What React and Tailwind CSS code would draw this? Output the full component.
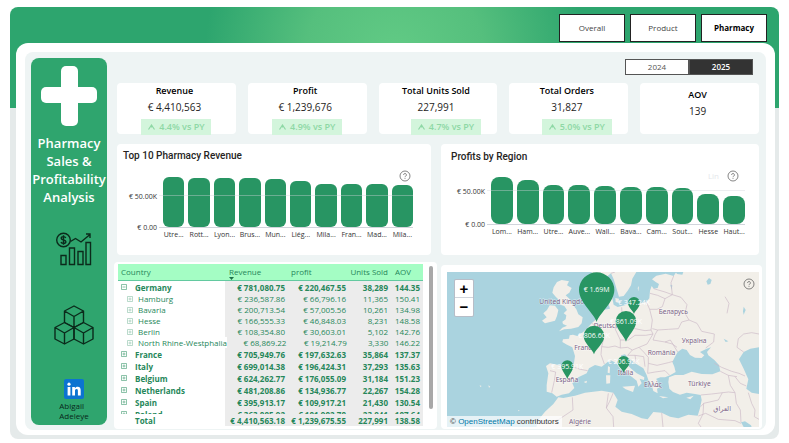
import { useState } from "react";
import clsx from "clsx";

const tabs = ["Overall", "Product", "Pharmacy"];
const years = ["2024", "2025"];

const kpis = [
  { label: "Revenue", value: "€ 4,410,563", change: "4.4% vs PY" },
  { label: "Profit", value: "€ 1,239,676", change: "4.9% vs PY" },
  { label: "Total Units Sold", value: "227,991", change: "4.7% vs PY", shifted: true },
  { label: "Total Orders", value: "31,827", change: "5.0% vs PY", shifted: true },
  { label: "AOV", value: "139" },
];

// bar heights in px above the axis
const pharmacyRevenue = [
  { name: "Utre...", height: 50 },
  { name: "Rott...", height: 49 },
  { name: "Lyon...", height: 49 },
  { name: "Brus...", height: 49 },
  { name: "Mun...", height: 48 },
  { name: "Liég...", height: 46 },
  { name: "Mila...", height: 43 },
  { name: "Fran...", height: 43 },
  { name: "Mad...", height: 43 },
  { name: "Mila...", height: 42 },
];

const regionProfit = [
  { name: "Lom...", height: 47 },
  { name: "Ham...", height: 44 },
  { name: "Utre...", height: 39 },
  { name: "Auve...", height: 39 },
  { name: "Wall...", height: 38 },
  { name: "Bava...", height: 37 },
  { name: "Cam...", height: 37 },
  { name: "Sout...", height: 36 },
  { name: "Hesse", height: 30 },
  { name: "Haut...", height: 28 },
];

const rows = [
  { name: "Germany", open: true, cells: ["€ 781,080.75", "€ 220,467.55", "38,289", "144.35"] },
  { name: "Hamburg", child: true, cells: ["€ 236,587.86", "€ 66,796.16", "11,365", "150.41"] },
  { name: "Bavaria", child: true, cells: ["€ 200,713.54", "€ 57,005.56", "10,261", "134.98"] },
  { name: "Hesse", child: true, cells: ["€ 166,555.33", "€ 46,848.03", "8,231", "148.58"] },
  { name: "Berlin", child: true, cells: ["€ 108,354.80", "€ 30,603.01", "5,102", "142.76"] },
  { name: "North Rhine-Westphalia", child: true, cells: ["€ 68,869.22", "€ 19,214.79", "3,330", "146.22"] },
  { name: "France", cells: ["€ 705,949.76", "€ 197,632.63", "35,864", "137.37"] },
  { name: "Italy", cells: ["€ 699,014.38", "€ 196,424.31", "37,293", "135.63"] },
  { name: "Belgium", cells: ["€ 624,262.77", "€ 176,055.09", "31,184", "151.23"] },
  { name: "Netherlands", cells: ["€ 481,208.86", "€ 134,936.77", "22,267", "154.28"] },
  { name: "Spain", cells: ["€ 395,913.17", "€ 109,917.21", "21,430", "130.54"] },
  { name: "Poland", cells: ["€ 363,085.92", "€ 101,902.70", "23,841", "107.64"] },
];

const totals = ["€ 4,410,563.18", "€ 1,239,675.55", "227,991", "138.58"];

const places = [
  { name: "United Kingdom", x: 313, y: 132 },
  { name: "Deutschland", x: 476, y: 203 },
  { name: "France", x: 418, y: 271 },
  { name: "España", x: 362, y: 366 },
  { name: "Italia", x: 548, y: 344 },
  { name: "România", x: 638, y: 285 },
  { name: "Україна", x: 740, y: 249 },
  { name: "Беларусь", x: 671, y: 161 },
  { name: "Ελλάς", x: 627, y: 381 },
  { name: "Türkiye", x: 759, y: 378 },
  { name: "العراق", x: 888, y: 454 },
  { name: "Algérie", x: 402, y: 492 },
];

const pins = [
  { label: "€ 347.24K", x: 597, y: 129, r: 18, tip: 162 },
  { label: "€ 1.69M", x: 485, y: 90, r: 53, tip: 186 },
  { label: "€ 861.09K", x: 573, y: 184, r: 31, tip: 245 },
  { label: "€ 806.60K", x: 477, y: 228, r: 31, tip: 283 },
  { label: "€ 206.92K", x: 566, y: 306, r: 18, tip: 338 },
  { label: "€ 395.91K", x: 397, y: 319, r: 18, tip: 357 },
];

const land = [
  // mainland europe, turkey and north africa
  "M972 36 L724 36 L716 48 L692 41 L664 47 L651 58 L662 66 L672 72 L668 84 L656 86 L650 78 L645 92 L643 115 L634 126 L615 130 L600 124 L572 135 L548 141 L536 134 L532 116 L536 98 L530 86 L519 95 L518 122 L525 146 L508 149 L495 156 L485 176 L470 190 L455 206 L440 220 L427 228 L414 224 L404 226 L402 236 L384 238 L382 246 L396 254 L412 262 L420 288 L415 322 L385 318 L345 310 L333 318 L340 340 L335 375 L335 395 L352 400 L365 410 L380 404 L402 400 L418 384 L412 370 L430 352 L455 340 L462 325 L480 315 L500 320 L515 308 L526 300 L545 310 L555 326 L575 340 L590 350 L605 362 L610 380 L620 370 L614 356 L627 360 L628 352 L605 340 L587 325 L572 310 L562 300 L558 286 L570 283 L578 292 L600 310 L625 325 L635 345 L640 360 L650 375 L655 393 L668 400 L666 386 L674 382 L668 370 L664 356 L676 352 L690 352 L705 346 L722 336 L718 320 L712 306 L720 290 L728 276 L742 266 L755 270 L765 285 L780 293 L800 294 L808 286 L795 276 L815 266 L828 262 L816 276 L820 286 L838 300 L852 315 L856 334 L832 343 L800 342 L770 335 L745 345 L720 345 L702 352 L700 366 L703 386 L714 396 L735 404 L755 398 L780 402 L797 405 L800 420 L795 445 L788 467 L760 464 L730 475 L705 470 L680 458 L655 456 L638 478 L620 475 L590 462 L560 455 L541 440 L548 420 L535 398 L500 392 L450 398 L420 407 L385 414 L370 412 L355 432 L330 455 L310 480 L304 501 L972 501 Z",
  // great britain
  "M366 66 L380 60 L402 64 L396 76 L410 84 L403 98 L392 106 L403 116 L412 132 L424 148 L430 163 L443 172 L440 190 L430 201 L408 206 L388 208 L372 214 L382 203 L396 197 L384 192 L382 185 L392 178 L394 166 L386 160 L396 150 L388 138 L376 134 L372 120 L362 110 L352 98 L356 82 Z",
  // ireland
  "M344 136 L360 137 L370 150 L366 168 L360 182 L330 190 L321 182 L335 172 L325 160 L336 150 Z",
  // scandinavia
  "M470 36 L474 48 L500 62 L528 40 L536 58 L544 84 L552 110 L566 108 L578 92 L588 76 L592 56 L604 36 Z",
  "M541 114 L552 116 L550 128 L542 126 Z",
  "M608 84 L612 78 L610 94 Z",
  // mediterranean islands
  "M519 318 L525 322 L524 340 L518 338 Z",
  "M513 346 L526 346 L525 370 L514 371 Z",
  "M562 380 L600 377 L594 396 L572 388 Z",
  "M672 408 L700 412 L684 415 Z",
  "M754 413 L776 407 L766 418 Z",
  "M446 366 L456 362 L454 370 Z",
  "M134 376 L140 378 L136 381 Z M160 376 L166 380 L162 383 Z M249 450 L254 451 L251 454 Z",
];

const lakes = [
  "M912 298 L926 276 L946 266 L972 262 L972 402 L950 398 L934 386 L940 358 L926 326 Z",
  "M918 487 L930 484 L948 496 L950 501 L926 501 Z",
  "M722 36 L745 36 L742 44 L726 42 Z",
  "M814 64 L822 54 L830 60 L826 72 L818 74 Z",
  "M706 74 L712 76 L710 90 Z",
  "M926 140 L932 150 L926 164 L924 154 Z",
  "M866 236 L880 244 L872 246 Z",
];

const borders = [
  "M345 332 L362 336 L358 362 L350 398",
  "M412 320 L436 328 L458 332",
  "M455 206 L472 216 L486 226 L506 236 L500 260 L498 284 L508 312",
  "M470 190 L484 198 L486 226 M486 176 L496 160",
  "M500 260 L520 262 L540 258 L556 264 L578 262 L592 270 L578 286",
  "M560 142 L562 180 L540 206 L556 240 L556 264",
  "M562 180 L584 194 L600 206 L630 212 L648 210 L652 180 L644 148 L634 126",
  "M540 206 L562 200 L584 194 M556 240 L580 240 L600 226 L632 226 L654 222 L648 210",
  "M592 270 L612 262 L636 252 L654 222 M612 262 L626 276 L640 292 L640 310",
  "M578 286 L600 286 L626 290 L630 320 M600 286 L604 308",
  "M640 310 L666 316 L700 308 L714 304 M654 240 L690 246 L706 240 L728 276",
  "M690 246 L712 252 L726 262 M640 310 L638 340 L660 336 L690 332 L704 346",
  "M645 100 L668 106 L690 116 L682 140 L666 148 L644 148",
  "M656 86 L690 96 L712 104 L690 116 M712 104 L708 68 L716 48",
  "M712 104 L738 112 L756 134 L750 160 L762 180 L740 186 L730 206 L700 208 L668 210 L652 206",
  "M762 180 L786 190 L800 214 L838 222 L836 246 L812 264",
  "M668 210 L660 224 L654 240",
  "M838 310 L860 322 L890 334 L912 340 L930 348 M856 334 L880 346 L906 350 M880 346 L886 376 L900 398 M900 350 L916 370 L934 378",
  "M797 405 L830 402 L880 396 L900 398 L904 430 L916 450 L918 487",
  "M797 440 L806 430 L850 420 L862 398 M790 468 L812 460 L850 478 L900 482 L918 490",
  "M806 430 L804 462 L790 490 L798 501",
  "M680 458 L684 501 M535 398 L524 424 L514 444 L534 470 L536 501",
  "M514 444 L520 400 M412 412 L414 450 L372 478 L330 492",
  "M910 236 L926 222 L950 218 L972 222 M910 236 L906 262 L926 276",
  "M940 398 L950 430 L960 450 L958 470 L972 478",
  "M528 40 L540 36 M870 110 L882 130 L876 160",
];

const HelpIcon = ({ className }) => (
  <svg className={clsx("size-3", className)} viewBox="0 0 12 12" fill="none" stroke="#666" strokeWidth="0.8">
    <circle cx="6" cy="6" r="5" />
    <path d="M4.6 4.9a1.4 1.4 0 1 1 2.1 1.2c-.5.3-.7.5-.7 1.1M6 8.1v.8" />
  </svg>
);

const Sidebar = () => (
  <aside className="mt-1.5 mb-1 flex w-[76px] shrink-0 flex-col items-center rounded-lg bg-[#2fa56e] pt-2">
    <svg className="h-[60px] w-14 fill-white" viewBox="0 0 56 60">
      <rect x="20" y="0" width="17" height="60" rx="5" />
      <rect x="0" y="21" width="56" height="16" rx="5" />
    </svg>
    <h1 className="mt-2 text-center text-[13px] leading-[18px] font-semibold whitespace-nowrap text-white">
      Pharmacy
      <br />
      Sales &amp;
      <br />
      Profitability
      <br />
      Analysis
    </h1>
    <div className="flex flex-col items-center pl-2.5">
      <svg className="mt-[26px] h-[34px] w-9" viewBox="0 0 36 34" fill="none" stroke="#0b2a1b" strokeWidth="1.4">
        <circle cx="7.5" cy="8" r="6.800" />
        <path d="M9.8 5.8C9.3 4.9 8.5 4.6 7.5 4.6c-1.300 0-2.300.6-2.300 1.600 0 2.500 4.700 1 4.700 3.500 0 1.100-1.100 1.700-2.400 1.700-1.200 0-2.100-.5-2.500-1.500M7.500 3.200v9.600" />
        <path d="M14.500 9.500l5-3 5.500 3.500 9-7.500M30 2h4v4" />
        <path d="M5 23.500h5v9H5zM13.500 16h5v16.500h-5zM22 19.500h5v13h-5zM30 10.500h4.500v22H30z" />
      </svg>
      <svg className="mt-[39px] size-10" viewBox="0 0 40 40" fill="none" stroke="#0b2a1b" strokeWidth="1.4" strokeLinejoin="round">
        <path d="M20 1l9.500 5v11.500L20 22.500l-9.500-5V6zM10.500 6l9.500 5.500L29.500 6M20 11.500v11" />
        <path d="M10.500 17.500l9.500 5V34l-9.500 5L1 34V22.500zM1 22.500L10.500 28l9.500-5.500M10.500 28v11" />
        <path d="M29.500 17.500l9.500 5V34l-9.500 5-9.500-5V22.500zM20 22.500l9.500 5.500 9.500-5.500M29.500 28v11" />
      </svg>
      <a href="#linkedin" className="mt-[34px] flex flex-col items-center text-[8px] leading-[10px] text-[#08271a]">
        <svg className="mb-0.5 size-5" viewBox="0 0 20 20">
          <rect width="20" height="20" rx="2" fill="#0b74d1" />
          <g fill="#fff">
            <circle cx="5" cy="5.200" r="1.600" />
            <path d="M3.600 8h2.800v8.500H3.600zM8.200 8h2.700v1.200c.5-.9 1.500-1.500 2.700-1.500 2.400 0 3.100 1.500 3.100 3.800v5h-2.800v-4.500c0-1.200-.2-2-1.300-2-1.200 0-1.600.9-1.600 2v4.500H8.200z" />
          </g>
        </svg>
        <span>
          Abigail
          <br />
          Adeleye
        </span>
      </a>
    </div>
  </aside>
);

const KpiCard = ({ kpi }) => (
  <div className={clsx("flex h-[51px] flex-col items-center rounded bg-white", kpi.change ? "pr-1" : "pt-1 pr-1")}>
    <div className="text-[9px] leading-4 font-semibold text-black">{kpi.label}</div>
    <div className="text-[10px] leading-4 font-medium text-[#252423]">{kpi.value}</div>
    {kpi.change && (
      <div className={clsx("mt-1", kpi.shifted ? "pl-5" : "pl-1")}>
        <div className="flex h-4 w-[70px] items-center justify-center gap-1 bg-[#d3f5dc] text-[9px] font-semibold text-[#8ed8a5]">
          <svg className="h-1.5 w-[7px]" viewBox="0 0 7 6" fill="none" stroke="currentColor" strokeWidth="1.200">
            <path d="M.5 5.500L3.500 1l3 4.500M3.500 1v2.500" />
          </svg>
          {kpi.change}
        </div>
      </div>
    )}
  </div>
);

const BarChart = ({ title, data, hint, className, sideClassName, barClassName, gridClassName }) => (
  <section className={clsx("relative h-[111px] rounded bg-white", className)}>
    <h2 className="font-[Roboto,sans-serif] text-[10px] leading-3 font-medium text-[#252423]">{title}</h2>
    <div className="absolute top-[26px] right-5 flex items-center gap-2 text-[8px] leading-3 text-gray-200">
      {hint}
      <HelpIcon />
    </div>
    <div className={clsx("mt-3 flex", sideClassName)}>
      <div className="relative w-[34px] shrink-0 text-right text-[7px] leading-2 text-[#333]">
        <span className={clsx("absolute right-0 translate-y-1/2 whitespace-nowrap", gridClassName)}>€ 50.00K</span>
        <span className="absolute right-0 bottom-0 translate-y-1/2 whitespace-nowrap">€ 0.00</span>
      </div>
      <div className="relative ml-0.5 flex h-[54px] flex-1 items-end gap-1 border-b border-gray-300 pl-1">
        {data.map((bar, i) => (
          <div key={i} className={clsx("flex-1 bg-[#289563]", barClassName)} style={{ height: bar.height }} />
        ))}
        <div className={clsx("absolute inset-x-0 h-px bg-gray-300/40", gridClassName)} />
      </div>
    </div>
    <div className={clsx("mt-px flex gap-1 pl-10", sideClassName)}>
      {data.map((bar, i) => (
        <span key={i} className="flex w-0 flex-1 justify-center text-[7px] leading-3 whitespace-nowrap text-[#333]">
          {bar.name}
        </span>
      ))}
    </div>
  </section>
);

const ToggleIcon = ({ open, faded }) => (
  <svg className={clsx("size-1.5 shrink-0", faded && "opacity-60")} viewBox="0 0 6 6" fill="none" stroke="#3f9a70" strokeWidth="0.600">
    <path d={open ? "M.5.5h5v5h-5zM1.500 3h3" : "M.5.5h5v5h-5zM1.500 3h3M3 1.500v3"} />
  </svg>
);

const rowGrid = "grid grid-cols-[107fr_63fr_61fr_42fr_32fr]";

const CountryTable = () => (
  <section className="flex h-[167px] gap-1.5 rounded-sm bg-white pt-0.5 pr-1 pl-1">
    <table className="block flex-1 text-[8px] leading-[11px] whitespace-nowrap text-[#26875a]">
      <thead className="block">
        <tr className={clsx(rowGrid, "h-[17px] border-b border-[#63c9a0] bg-[#a4fdc4] pt-0.5")}>
          <th className="pl-[3px] text-left font-normal">Country</th>
          <th className="pl-1 text-left font-normal" aria-sort="descending">
            Revenue
            <svg className="h-[3px] w-[5px]" viewBox="0 0 5 3">
              <path d="M0 0h5L2.500 3z" fill="#1d6f49" />
            </svg>
          </th>
          <th className="pl-[3px] text-left font-normal">profit</th>
          <th className="flex justify-end pr-[3px] font-normal">Units Sold</th>
          <th className="pl-1 text-left font-normal">AOV</th>
        </tr>
      </thead>
      <tbody className="block h-[133px] overflow-hidden">
        {rows.map((row) => (
          <tr key={row.name} className={clsx(rowGrid, row.child ? "h-[11px]" : "h-3 font-bold")}>
            <th
              scope="row"
              className={clsx("flex items-center text-left", row.child ? "gap-[5px] pl-[9px] font-normal" : "gap-2 pl-[3px] font-bold")}
            >
              <ToggleIcon open={row.open} faded={row.child} />
              {row.name}
            </th>
            {row.cells.map((cell, i) => (
              <td key={i} className="flex items-center justify-end bg-[#ececec] pr-[3px]">
                {cell}
              </td>
            ))}
          </tr>
        ))}
      </tbody>
      <tfoot className="block">
        <tr className={clsx(rowGrid, "h-3 font-bold")}>
          <th scope="row" className="flex items-center pl-[17px] text-left">
            Total
          </th>
          {totals.map((cell) => (
            <td key={cell} className="flex items-center justify-end bg-[#ececec] pr-[3px]">
              {cell}
            </td>
          ))}
        </tr>
      </tfoot>
    </table>
    <div className="mt-0.5 h-[143px] w-1 rounded-full bg-[#a8a8a8]" />
  </section>
);

const pinPath = ({ x, y, r, tip }) =>
  `M${x} ${tip} C${x - r * 0.15} ${tip - r * 0.5} ${x - r} ${y + r * 0.7} ${x - r} ${y} A${r} ${r} 0 0 1 ${x + r} ${y} C${x + r} ${y + r * 0.7} ${x + r * 0.15} ${tip - r * 0.5} ${x} ${tip} Z`;

const RegionMap = () => (
  <section className="mt-[3px] rounded bg-white pt-[7px] pr-[3px] pb-0.5 pl-1.5">
    <div className="relative h-[155px] overflow-hidden">
      <svg className="size-full bg-[#aad3df]" viewBox="36 36 936 465" preserveAspectRatio="xMidYMid slice">
        {land.map((d) => (
          <path key={d} d={d} fill="#f2efe9" />
        ))}
        {lakes.map((d) => (
          <path key={d} d={d} fill="#aad3df" />
        ))}
        {borders.map((d) => (
          <path key={d} d={d} fill="none" stroke="#cbb9c7" strokeWidth="2" strokeLinejoin="round" />
        ))}
        <g className="font-['Noto_Sans','DejaVu_Sans',sans-serif]" fontSize="20" fill="#7a6385" stroke="#fff" strokeWidth="3" strokeOpacity="0.6" paintOrder="stroke">
          {places.map((place) => (
            <text key={place.name} x={place.x} y={place.y} textAnchor={place.name === "العراق" ? "end" : "start"} direction="ltr">
              {place.name}
            </text>
          ))}
        </g>
        {pins.map((pin) => (
          <g key={pin.label}>
            <path d={pinPath(pin)} fill="#289563" />
            <text x={pin.x} y={pin.y + 7} textAnchor="middle" fontSize="21" fill="#fff">
              {pin.label}
            </text>
          </g>
        ))}
      </svg>
      <div className="absolute top-[7px] left-[7px] flex w-5 flex-col rounded-xs border border-gray-400/70 bg-white font-['Liberation_Sans',sans-serif] text-[15px] font-bold text-black">
        <button type="button" aria-label="Zoom in" className="h-[18px] border-b border-gray-300 leading-[18px]">
          +
        </button>
        <button type="button" aria-label="Zoom out" className="h-[18px] leading-4">
          −
        </button>
      </div>
      <HelpIcon className="absolute top-1.5 right-1" />
      <div className="absolute bottom-0 left-0 bg-white/70 px-[3px] font-['Liberation_Sans',sans-serif] text-[8px] leading-[11px] text-[#333]">
        © <a href="https://www.openstreetmap.org/copyright" className="text-[#0078a8]">OpenStreetMap</a> contributors
      </div>
    </div>
  </section>
);

export default function App() {
  const [tab, setTab] = useState("Pharmacy");
  const [year, setYear] = useState("2025");

  return (
    <div className="bg-white px-2.5 pt-[7px] pb-1 font-['Open_Sans','Noto_Sans',sans-serif]">
      <div className="rounded-lg bg-[#e5eaea] bg-[radial-gradient(circle_at_50%_50%,#62cb85_0px,#55bf7d_90px,#2da56e_190px)] bg-[length:100%_101px] bg-no-repeat pb-1">
        <nav className="flex justify-end gap-[5px] pt-[7px] pr-3 pb-px">
          {tabs.map((name) => (
            <button
              key={name}
              type="button"
              onClick={() => setTab(name)}
              className={clsx("h-7 w-[66px] border border-[#222] bg-white text-[8px]", tab === name ? "font-bold text-black" : "text-[#444]")}
            >
              {name}
            </button>
          ))}
        </nav>

        <div className="mr-1 ml-1.5 rounded-xl bg-white px-[9px] pt-[9px] pb-[5px]">
          <main className="flex rounded-lg bg-[#eef4f4] pr-[7px] pb-px pl-1.5">
            <Sidebar />
            <div className="ml-2.5 min-w-0 flex-1 pt-[7px]">
              <div className="flex justify-end pr-1.5">
                {years.map((y) => (
                  <button
                    key={y}
                    type="button"
                    onClick={() => setYear(y)}
                    className={clsx(
                      "flex h-4 w-16 items-center justify-center border border-[#555] text-[8px]",
                      year === y ? "bg-[#333] font-semibold text-white" : "bg-white text-[#555]"
                    )}
                  >
                    {y}
                  </button>
                ))}
              </div>

              <div className="mt-2 grid grid-cols-5 gap-3">
                {kpis.map((kpi) => (
                  <KpiCard key={kpi.label} kpi={kpi} />
                ))}
              </div>

              <div className="mt-2.5 grid grid-cols-[314fr_318fr] gap-2.5">
                <BarChart
                  title="Top 10 Pharmacy Revenue"
                  data={pharmacyRevenue}
                  className="pt-1.5 pl-1.5"
                  sideClassName="pr-[18px]"
                  barClassName="rounded-md"
                  gridClassName="bottom-[31px]"
                />
                <BarChart
                  title="Profits by Region"
                  data={regionProfit}
                  hint="Lin"
                  className="pt-[7px] pl-2.5 [&>h2]:-mb-1"
                  sideClassName="pr-3.5"
                  barClassName="rounded-[8px]"
                  gridClassName="bottom-[33px]"
                />
              </div>

              <div className="-mx-[3px] mt-[7px] grid grid-cols-[323fr_321fr] gap-1">
                <CountryTable />
                <RegionMap />
              </div>
            </div>
          </main>
        </div>
      </div>
    </div>
  );
}
